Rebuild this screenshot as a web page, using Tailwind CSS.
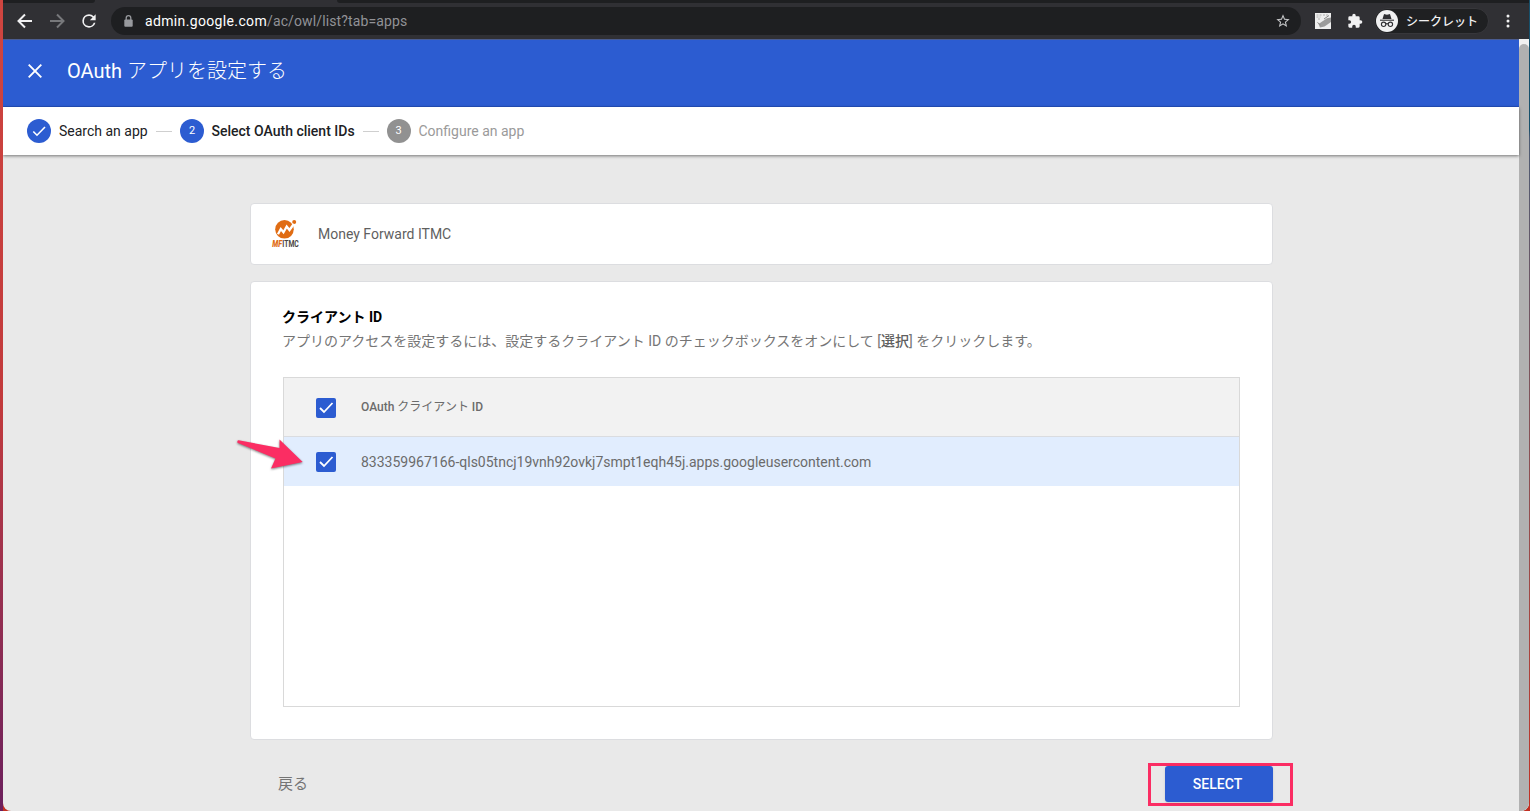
<!DOCTYPE html>
<html lang="ja">
   <head>
      <meta charset="UTF-8" />
      <meta name="viewport" content="width=device-width, initial-scale=1.0" />
      <script src="https://cdn.jsdelivr.net/npm/@tailwindcss/browser@4"></script>
      <title>OAuth アプリを設定する</title>
   </head>
   <body
      class="h-[811px] w-[1530px] overflow-hidden bg-linear-to-b from-[#cf4540] via-[#c23a3c] to-[#6b1f5c] pl-[3px] font-['Roboto','Noto_Sans_CJK_JP',sans-serif]"
   >
      <div class="flex h-full bg-linear-to-b from-[#17506b] from-[16%] via-[#4c5a72] via-[17%] to-[#c22f22]">
         <div class="flex h-full w-[1526px] flex-col overflow-hidden rounded-b-lg bg-[#e9e9e9]">
            <!-- Browser -->
            <div class="flex h-[3px] shrink-0 bg-[#303034]">
               <div class="w-[92px] rounded-br-md bg-[#1e1f21]"></div>
               <div class="w-[242px]"></div>
               <div class="flex-1 rounded-bl-md bg-[#1e1f21]"></div>
            </div>
            <div class="flex h-9 shrink-0 items-center bg-[#303034] pl-[13px]">
               <svg class="size-[18px]" viewBox="0 0 18 18" fill="none" stroke="#f1f1f2" stroke-width="2">
                  <path d="M16 9H3M9 2.5L2.5 9L9 15.5" />
               </svg>
               <svg class="ml-[14px] size-[18px]" viewBox="0 0 18 18" fill="none" stroke="#77787b" stroke-width="2">
                  <path d="M2 9h13M9 2.5L15.5 9L9 15.5" />
               </svg>
               <svg class="ml-[13px] size-5" viewBox="0 0 24 24" fill="#f1f1f2">
                  <path d="M17.65 6.35A7.96 7.96 0 0 0 12 4a8 8 0 1 0 7.73 10h-2.08A6 6 0 1 1 12 6c1.66 0 3.14.69 4.22 1.78L13 11h7V4z" />
               </svg>
               <div class="ml-3 flex h-7 w-[1190px] items-center rounded-full bg-[#1e1f21] pr-[10px] pl-[13px]">
                  <svg class="h-[12px] w-[9px]" viewBox="0 0 9 12" fill="none">
                     <path d="M2.2 6V3a2.3 2.3 0 0 1 4.6 0v3" stroke="#989a9e" stroke-width="1.3" />
                     <rect x="0.3" y="4.5" width="8.4" height="7.2" rx="1" fill="#989a9e" />
                  </svg>
                  <p class="ml-3 flex-1 text-sm tracking-[0.12px] whitespace-nowrap text-[#919297]"><span class="tracking-[0.35px] text-white">admin.google.com</span>/ac/owl/list?tab=apps</p>
                  <svg class="size-4" viewBox="0 0 24 24" fill="#c5c6c8">
                     <path d="M22 9.24l-7.19-.62L12 2 9.19 8.63 2 9.24l5.46 4.73L5.82 21 12 17.27 18.18 21l-1.63-7.03zM12 15.4l-3.76 2.27 1-4.28-3.32-2.88 4.38-.38L12 6.1l1.71 4.04 4.38.38-3.32 2.88 1 4.28z" />
                  </svg>
               </div>
               <svg class="ml-[14px] size-4" viewBox="0 0 16 16">
                  <rect width="16" height="16" fill="#eeeeee" />
                  <path d="M1.500 2h5M8 2h6M1.500 4h4M3 6h3" stroke="#b0b0b0" stroke-dasharray="2 1" />
                  <path d="M3.500 11L12 5.200l4-.7v4.500l-6.500 4.500-4.500 1z" fill="#9b9b9b" />
                  <path d="M2.500 9.500l3 2.500M9 6l5-3.500" stroke="#858585" stroke-width="1" />
               </svg>
               <svg class="ml-[16px] size-4" viewBox="0 0 24 24" fill="#f1f1f2">
                  <path d="M20.500 11H19V7a2 2 0 0 0-2-2h-4V3.500a2.500 2.500 0 0 0-5 0V5H4a2 2 0 0 0-2 2v3.800h1.500a2.700 2.700 0 0 1 0 5.400H2V20a2 2 0 0 0 2 2h3.800v-1.500a2.700 2.700 0 0 1 5.400 0V22H17a2 2 0 0 0 2-2v-4h1.500a2.500 2.500 0 0 0 0-5z" />
               </svg>
               <div class="ml-[11px] flex h-[26px] w-[115px] items-center rounded-full border border-[#37373b] bg-[#1f2022] pl-px">
                  <svg class="size-[22px] shrink-0" viewBox="0 0 22 22">
                     <circle cx="11" cy="11" r="11" fill="#f1f1f2" />
                     <path d="M6.500 9l1.300-4.300q.3-.8 1.100-.5l2.100.5 2.100-.5q.8-.3 1.100.5L15.500 9z" fill="#303034" />
                     <path d="M4 10.200h14" stroke="#303034" stroke-width="1.100" />
                     <g fill="none" stroke="#303034" stroke-width="1.100">
                        <circle cx="7.600" cy="14.300" r="2.200" />
                        <circle cx="14.400" cy="14.300" r="2.200" />
                        <path d="M9.800 14q1.200-.8 2.400 0" />
                     </g>
                  </svg>
                  <span class="mt-px ml-2 text-[12px] leading-5 font-medium whitespace-nowrap text-[#f1f1f2]">シークレット</span>
               </div>
               <svg class="ml-[17px] h-4 w-1" viewBox="0 0 4 16" fill="#f1f1f2">
                  <circle cx="2" cy="3" r="1.500" />
                  <circle cx="2" cy="8" r="1.500" />
                  <circle cx="2" cy="13" r="1.500" />
               </svg>
            </div>

            <div class="flex min-h-0 flex-1">
               <div class="flex w-[1516px] flex-col">
                  <header class="flex h-[68px] shrink-0 items-center border-t border-b border-t-[#4a5c92] border-b-[#2450bf] bg-[#2c5cd1] pb-[5px] pl-[25px] text-white">
                     <svg class="size-[14px]" viewBox="0 0 14 14" fill="none" stroke="currentColor" stroke-width="1.900">
                        <path d="M.7.700l12.600 12.600M13.300.700L.700 13.300" />
                     </svg>
                     <h1 class="ml-[25px] text-[20px] leading-7 font-light whitespace-nowrap"><span class="font-normal">OAuth</span> アプリを設定する</h1>
                  </header>

                  <nav class="z-10 flex h-12 shrink-0 items-center bg-white pl-6 text-sm whitespace-nowrap shadow-[0_1px_3px_rgba(0,0,0,0.5)]">
                     <svg class="size-6" viewBox="0 0 24 24">
                        <circle cx="12" cy="12" r="12" fill="#2c5cd1" />
                        <path d="M6.300 12.500l3.700 3.700 8-8.200" fill="none" stroke="#fff" stroke-width="1.600" />
                     </svg>
                     <span class="ml-2 w-[88px] text-[#202124]">Search an app</span>
                     <span class="ml-[9px] h-px w-4 bg-[#cfcfcf]"></span>
                     <span class="ml-2 flex size-6 items-center justify-center rounded-full bg-[#2c5cd1] text-[11px] text-white">2</span>
                     <span class="ml-[7.5px] w-[143.5px] font-medium text-[#202124]">Select OAuth client IDs</span>
                     <span class="ml-2 h-px w-4 bg-[#cfcfcf]"></span>
                     <span class="ml-[7.5px] flex size-6 items-center justify-center rounded-full bg-[#919191] text-[11px] text-white">3</span>
                     <span class="ml-2 text-[#9a9a9a]">Configure an app</span>
                  </nav>

                  <main class="ml-[247px] w-[1023px] pt-12">
                     <div class="flex h-[62px] items-center rounded border border-[#dcdde0] bg-white pl-[21px]">
                        <svg class="h-[30px] w-[28px] overflow-visible" viewBox="0 0 28 30">
                           <circle cx="12.500" cy="10.300" r="9.300" fill="#e06c13" />
                           <circle cx="22.200" cy="3" r="2" fill="#e06c13" />
                           <path d="M6 15.300l2.800-5.300 2.700 3.300 3.200-5.800 2.800 3.500 4.300-6" fill="none" stroke="#fff" stroke-width="2.300" />
                           <text x="0.300" y="28" font-size="8.500" font-weight="900" textLength="9.700" lengthAdjust="spacingAndGlyphs" fill="#e06c13" font-style="italic">MF</text>
                           <text x="10.300" y="28" font-size="8.500" font-weight="700" textLength="16.500" lengthAdjust="spacingAndGlyphs" fill="#4a4442">ITMC</text>
                        </svg>
                        <p class="ml-[18px] text-sm text-[#5f5f5f]">Money Forward ITMC</p>
                     </div>

                     <div class="mt-4 h-[459px] rounded border border-[#dcdde0] bg-white px-8 pt-[23px]">
                        <h2 class="-ml-px h-6 text-sm leading-6 font-bold text-black">クライアント ID</h2>
                        <p class="-ml-px h-6 text-sm leading-6 whitespace-nowrap text-[#757575]">アプリのアクセスを設定するには、設定するクライアント ID のチェックボックスをオンにして [<b class="font-medium text-[#5f5f5f]">選択</b>] をクリックします。</p>
                        <div class="mt-6 h-[330px] border border-[#d9d9d9] text-[#6b6b6b]">
                           <div class="flex h-[59px] items-center border-b border-[#dadce0] bg-[#f2f2f2] pl-8 text-xs">
                              <svg class="mt-px size-5" viewBox="0 0 20 20">
                                 <rect width="20" height="20" rx="2" fill="#2c5cd1" />
                                 <path d="M4 10l4 4 8.500-9" fill="none" stroke="#fff" stroke-width="1.800" />
                              </svg>
                              <span class="ml-[25px] font-medium whitespace-nowrap">OAuth <span class="font-normal">クライアント</span> ID</span>
                           </div>
                           <div class="flex h-[49px] items-center bg-[#e1edfe] pl-8 text-sm">
                              <svg class="mt-px size-5" viewBox="0 0 20 20">
                                 <rect width="20" height="20" rx="2" fill="#2c5cd1" />
                                 <path d="M4 10l4 4 8.500-9" fill="none" stroke="#fff" stroke-width="1.800" />
                              </svg>
                              <span class="ml-[25px] whitespace-nowrap">833359967166-qls05tncj19vnh92ovkj7smpt1eqh45j.apps.googleusercontent.com</span>
                           </div>
                        </div>
                     </div>

                     <div class="mt-[23px] flex h-[43px] items-center justify-between pl-7">
                        <a class="-mt-px text-[15px] leading-5 text-[#757575]">戻る</a>
                        <div class="-mr-5 flex h-[43px] w-[145px] justify-center border-3 border-[#fb2d63]">
                           <button class="-ml-[4px] h-9 w-[108px] rounded-[3px] bg-[#2c5cd1] pr-[2px] text-sm font-medium text-white shadow">SELECT</button>
                        </div>
                     </div>
                  </main>
               </div>
               <div class="w-[10px] bg-[#f1f1f1] pt-[5px]">
                  <div class="h-full rounded-t-full bg-[#b1b1b1]"></div>
               </div>
            </div>
         </div>
      </div>

      <!-- Arrow to the checkbox -->
      <svg class="absolute top-[434px] left-[232px] h-[40px] w-[76px] drop-shadow-[0_1px_1px_rgba(0,0,0,0.5)]" viewBox="0 0 76 40" fill="#fb2d63">
         <path d="M5.500 7Q5.500 6 8 6.500L47.500 14L47.500 5.500L70.700 28L39 34.500L43.500 24.500L6 9Q5 8.500 5.500 7z" />
      </svg>
   </body>
</html>
